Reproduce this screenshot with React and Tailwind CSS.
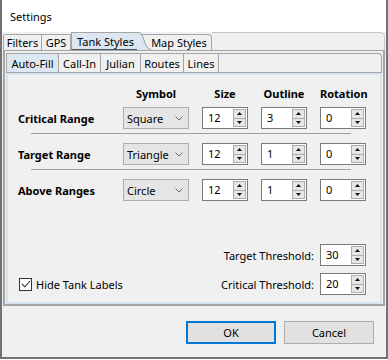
import React from 'react'

const ROWS = [
  { label: 'Critical Range', symbol: 'Square', size: 12, outline: 3, rotation: 0 },
  { label: 'Target Range', symbol: 'Triangle', size: 12, outline: 1, rotation: 0 },
  { label: 'Above Ranges', symbol: 'Circle', size: 12, outline: 1, rotation: 0 },
]

const INNER_TABS = [
  { name: 'Auto-Fill', w: 'w-[53px]' },
  { name: 'Call-In', w: 'w-[42px]' },
  { name: 'Julian', w: 'w-[40px]' },
  { name: 'Routes', w: 'w-[43px]' },
  { name: 'Lines', w: 'w-[35px]' },
]

function Arrow({ up }) {
  return (
    <svg width="5" height="3" viewBox="0 0 5 3">
      <path d={up ? 'M0 3 L2.5 0 L5 3 Z' : 'M0 0 L2.5 3 L5 0 Z'} fill="#111" />
    </svg>
  )
}

function Spin({ value }) {
  return (
    <div className="flex h-[22px] w-[46px] border border-[#7a7a7a] bg-white">
      <span className="flex-1 pl-[5px] leading-[20px]">{value}</span>
      <div className="flex w-[14px] flex-col py-[1px] pr-[1px]">
        <div className="flex flex-1 items-center justify-center border border-[#adadad] bg-[#e6e6e6]">
          <Arrow up />
        </div>
        <div className="flex flex-1 items-center justify-center border border-t-0 border-[#adadad] bg-[#e6e6e6]">
          <Arrow />
        </div>
      </div>
    </div>
  )
}

function Combo({ value }) {
  return (
    <div className="flex h-[22px] w-[66px] items-center justify-between border border-[#adadad] bg-[#e5e5e5] pl-[3px] pr-[5px]">
      <span>{value}</span>
      <svg width="8" height="5" viewBox="0 0 8 5">
        <path d="M0.5 0.5 L4 4 L7.5 0.5" stroke="#6b6b6b" fill="none" />
      </svg>
    </div>
  )
}

export default function App() {
  return (
    <div className="h-[359px] w-[388px] border-x-2 border-b-2 border-[#727272] bg-[#f0f0f0] font-['Noto_Sans',sans-serif] text-[11px] leading-[15px] text-black">
      {/* title bar */}
      <div className="flex h-[32px] items-center bg-white pl-[8px] text-[11px]">Settings</div>

      <div className="mx-[1px]">
        {/* outer tabs */}
        <div className="flex h-[18px] items-end">
          <div className="flex h-[16px] w-[39px] items-center justify-center border-x border-t border-[#a5a5a5] rounded-tl-[2px]">Filters</div>
          <div className="flex h-[16px] w-[29px] items-center justify-center border-r border-t border-[#a5a5a5]">GPS</div>
          <div className="flex h-[18px] w-[66px] items-center justify-center border-l border-t border-b border-l-[#a5a5a5] border-t-[#a5a5a5] border-b-[#4a5560] bg-[#dce7f3] pl-[2px]">
            Tank Styles
          </div>
          <svg width="14" height="18" viewBox="0 0 14 18" className="shrink-0">
            <path d="M0 0 H2 C7 0 7 17 14 17 V18 H0 Z" fill="#dce7f3" />
            <path d="M0 0.5 H2 C7 0.5 7 17.5 14 17.5" stroke="#9a9a9a" fill="none" />
            <path d="M5 2.5 H14" stroke="#a5a5a5" />
          </svg>
          <div className="flex h-[16px] w-[61px] items-center justify-center border-r border-t border-[#a5a5a5] rounded-tr-[4px] pr-[4px]">Map Styles</div>
          <div className="h-[18px] flex-1 rounded-tr-[5px] border-r border-t border-[#c8c8c8]" />
        </div>

        {/* outer panel */}
        <div className="border-x-2 border-b-2 border-t border-[#a5a5a5] px-[1px] pt-[2px]">
          {/* inner tabs */}
          <div className="flex h-[19px]">
            {INNER_TABS.map((t, i) => (
              <div
                key={t.name}
                className={`flex h-[19px] ${t.w} items-center justify-center border-t border-r border-[#a5a5a5] ${i === 0 ? 'border-l bg-[#dce7f3]' : ''}`}
              >
                {t.name}
              </div>
            ))}
            <div className="flex-1 rounded-tr-[4px] border-r border-t border-[#a5a5a5]" />
          </div>

          {/* inner panel */}
          <div className="border-t border-[#a5a5a5]">
            <div className="flex h-[231px] flex-col border-2 border-[#d6e3f0] pl-[10px] pr-[14px] pt-[10px] pb-[7px]">
              {/* header */}
              <div className="flex h-[16px] items-center font-bold">
                <div className="w-[105px]" />
                <div className="w-[66px] text-center">Symbol</div>
                <div className="ml-[13px] w-[46px] text-center">Size</div>
                <div className="ml-[13px] w-[46px] text-center">Outline</div>
                <div className="ml-[13px] w-[46px] text-center">Rotation</div>
              </div>

              {ROWS.map((r, i) => (
                <div key={r.label}>
                  {i > 0 && <div className="ml-[13px] mt-[4px] mb-[9px] w-[320px] border-t border-[#a0a0a0]" />}
                  <div className={`flex h-[22px] items-center ${i === 0 ? 'mt-[6px]' : ''}`}>
                    <div className="w-[105px] font-bold">{r.label}</div>
                    <Combo value={r.symbol} />
                    <div className="ml-[13px]"><Spin value={r.size} /></div>
                    <div className="ml-[13px]"><Spin value={r.outline} /></div>
                    <div className="ml-[13px]"><Spin value={r.rotation} /></div>
                  </div>
                </div>
              ))}

              {/* bottom */}
              <div className="mt-auto flex items-end justify-between">
                <label className="flex h-[22px] items-center gap-[4px] pl-[1px]">
                  <span className="flex h-[13px] w-[13px] items-center justify-center border border-[#333] bg-white">
                    <svg width="10" height="8" viewBox="0 0 10 8">
                      <path d="M1 4 L3.8 6.8 L9 1" stroke="#333" strokeWidth="1.1" fill="none" />
                    </svg>
                  </span>
                  Hide Tank Labels
                </label>
                <div className="flex flex-col gap-[7px]">
                  <div className="flex h-[22px] items-center justify-end gap-[6px]">
                    <span>Target Threshold:</span>
                    <Spin value={30} />
                  </div>
                  <div className="flex h-[22px] items-center justify-end gap-[6px]">
                    <span>Critical Threshold:</span>
                    <Spin value={20} />
                  </div>
                </div>
              </div>
            </div>
          </div>
        </div>

        {/* buttons */}
        <div className="flex justify-end gap-[8px] pr-[11px] pt-[15px]">
          <button className="h-[23px] w-[90px] border-2 border-[#0078d7] bg-[#e1e1e1] text-[11px]">OK</button>
          <button className="h-[23px] w-[90px] border border-[#adadad] bg-[#e1e1e1] text-[11px]">Cancel</button>
        </div>
      </div>
    </div>
  )
}
